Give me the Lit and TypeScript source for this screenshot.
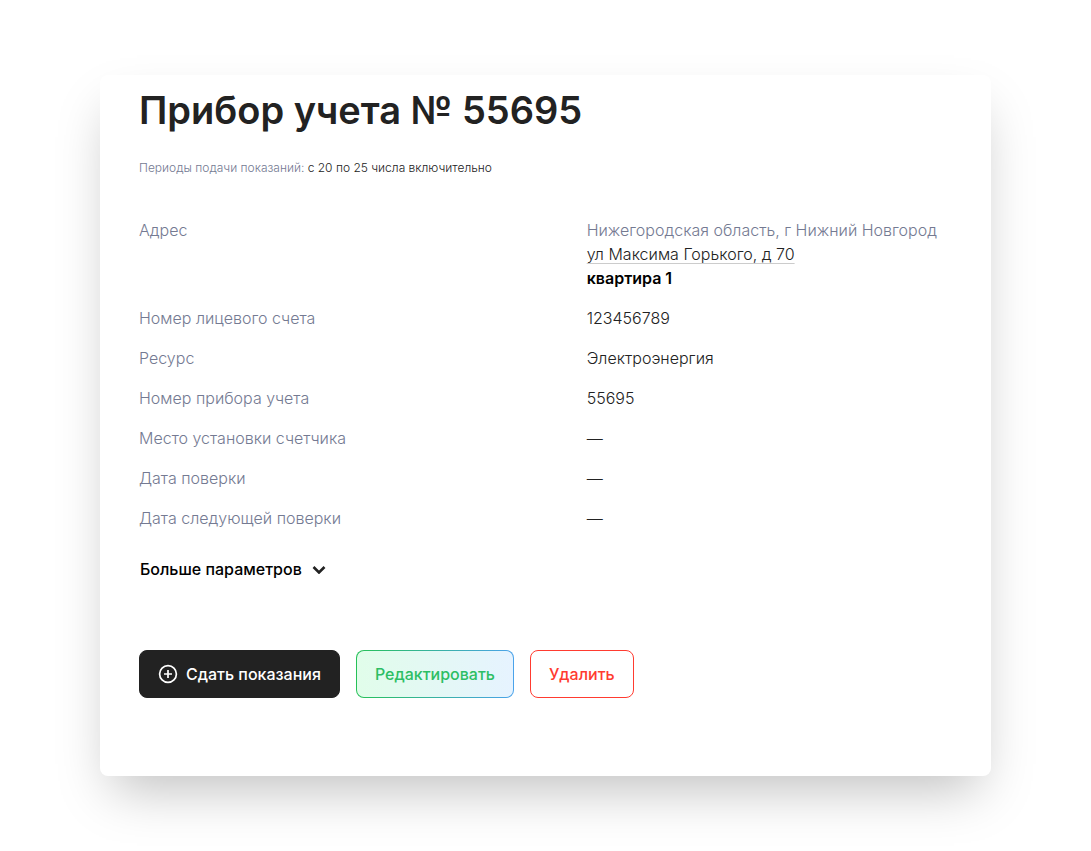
import { LitElement, html, css } from "lit";
import { customElement, state } from "lit/decorators.js";

const details: [string, string][] = [
  ["Номер лицевого счета", "123456789"],
  ["Ресурс", "Электроэнергия"],
  ["Номер прибора учета", "55695"],
  ["Место установки счетчика", "—"],
  ["Дата поверки", "—"],
  ["Дата следующей поверки", "—"],
];

@customElement("app-root")
export class AppRoot extends LitElement {
  static styles = css`
    :host {
      display: block;
      box-sizing: border-box;
      min-height: 100vh;
      padding: 75px 100px;
      background: #fff;
      color: #222;
      font: 400 16px/24px Inter, "Noto Sans", sans-serif;
    }
    .card {
      padding: 11px 38px 78px 39px;
      border-radius: 8px;
      background: #fff;
      box-shadow: 0 25px 50px -12px rgba(0, 0, 0, 0.25);
    }
    .title {
      margin: 0;
      font-size: 38px;
      line-height: 48px;
      font-weight: 600;
    }
    .period {
      margin: 26px 0 42px;
      font-size: 12px;
      line-height: 16px;
      font-weight: 300;
    }
    .muted,
    .term {
      color: #747a92;
      font-weight: 300;
    }
    .list {
      display: grid;
      gap: 16px;
      margin: 0;
    }
    .row {
      display: grid;
      grid-template-columns: 55% 1fr;
    }
    .value {
      margin: 0;
      font-weight: 300;
    }
    .line {
      display: block;
    }
    .street {
      color: inherit;
      text-decoration: underline 1px #ccc;
      text-underline-offset: 3px;
    }
    .flat {
      display: block;
      color: #000;
      font-weight: 600;
    }
    button {
      font: inherit;
      cursor: pointer;
    }
    .more {
      display: flex;
      align-items: center;
      gap: 10px;
      margin: 27px 0 69px;
      padding: 0 1px;
      border: 0;
      background: none;
      color: #000;
      font-weight: 500;
    }
    .actions {
      display: flex;
      flex-wrap: wrap;
      gap: 16px;
    }
    .button {
      display: flex;
      align-items: center;
      gap: 8px;
      height: 48px;
      padding: 0 18px;
      border: 1px solid #222;
      border-radius: 8px;
      font-weight: 500;
    }
    .submit {
      background: #222;
      color: #fff;
    }
    .edit {
      border-color: transparent;
      background:
        linear-gradient(90deg, #e1fdea, #e6f3ff) padding-box,
        linear-gradient(90deg, #26c157, #4ba3eb) border-box;
      color: #2dbe64;
    }
    .remove {
      border-color: #ff3b30;
      background: #fff;
      color: #ff3b30;
    }
  `;

  @state() private expanded = false;

  render() {
    return html`
      <main class="card">
        <h1 class="title">Прибор учета № 55695</h1>
        <p class="period"><span class="muted">Периоды подачи показаний:</span> с 20 по 25 числа включительно</p>
        <dl class="list">
          <div class="row">
            <dt class="term">Адрес</dt>
            <dd class="value">
              <span class="line muted">Нижегородская область, г Нижний Новгород</span>
              <span class="line"><a class="street" href="#">ул Максима Горького, д 70</a></span>
              <strong class="flat">квартира 1</strong>
            </dd>
          </div>
          ${details.map(
            ([term, value]) => html`<div class="row">
              <dt class="term">${term}</dt>
              <dd class="value">${value}</dd>
            </div>`
          )}
        </dl>
        <button
          class="more"
          type="button"
          aria-expanded=${this.expanded ? "true" : "false"}
          @click=${() => (this.expanded = !this.expanded)}
        >
          Больше параметров
          <svg width="14" height="10" viewBox="0 0 14 10" fill="none" stroke="#222" stroke-width="2.6" aria-hidden="true">
            <path d="M1.5 3 7 8.500l5.500-5.500" />
          </svg>
        </button>
        <div class="actions">
          <button class="button submit" type="button">
            <svg width="20" height="20" viewBox="0 0 20 20" fill="none" stroke="#fff" stroke-width="1.7" aria-hidden="true">
              <circle cx="10" cy="10" r="8.4" />
              <path d="M10 6v8M6 10h8" />
            </svg>
            Сдать показания
          </button>
          <button class="button edit" type="button">Редактировать</button>
          <button class="button remove" type="button">Удалить</button>
        </div>
      </main>
    `;
  }
}
